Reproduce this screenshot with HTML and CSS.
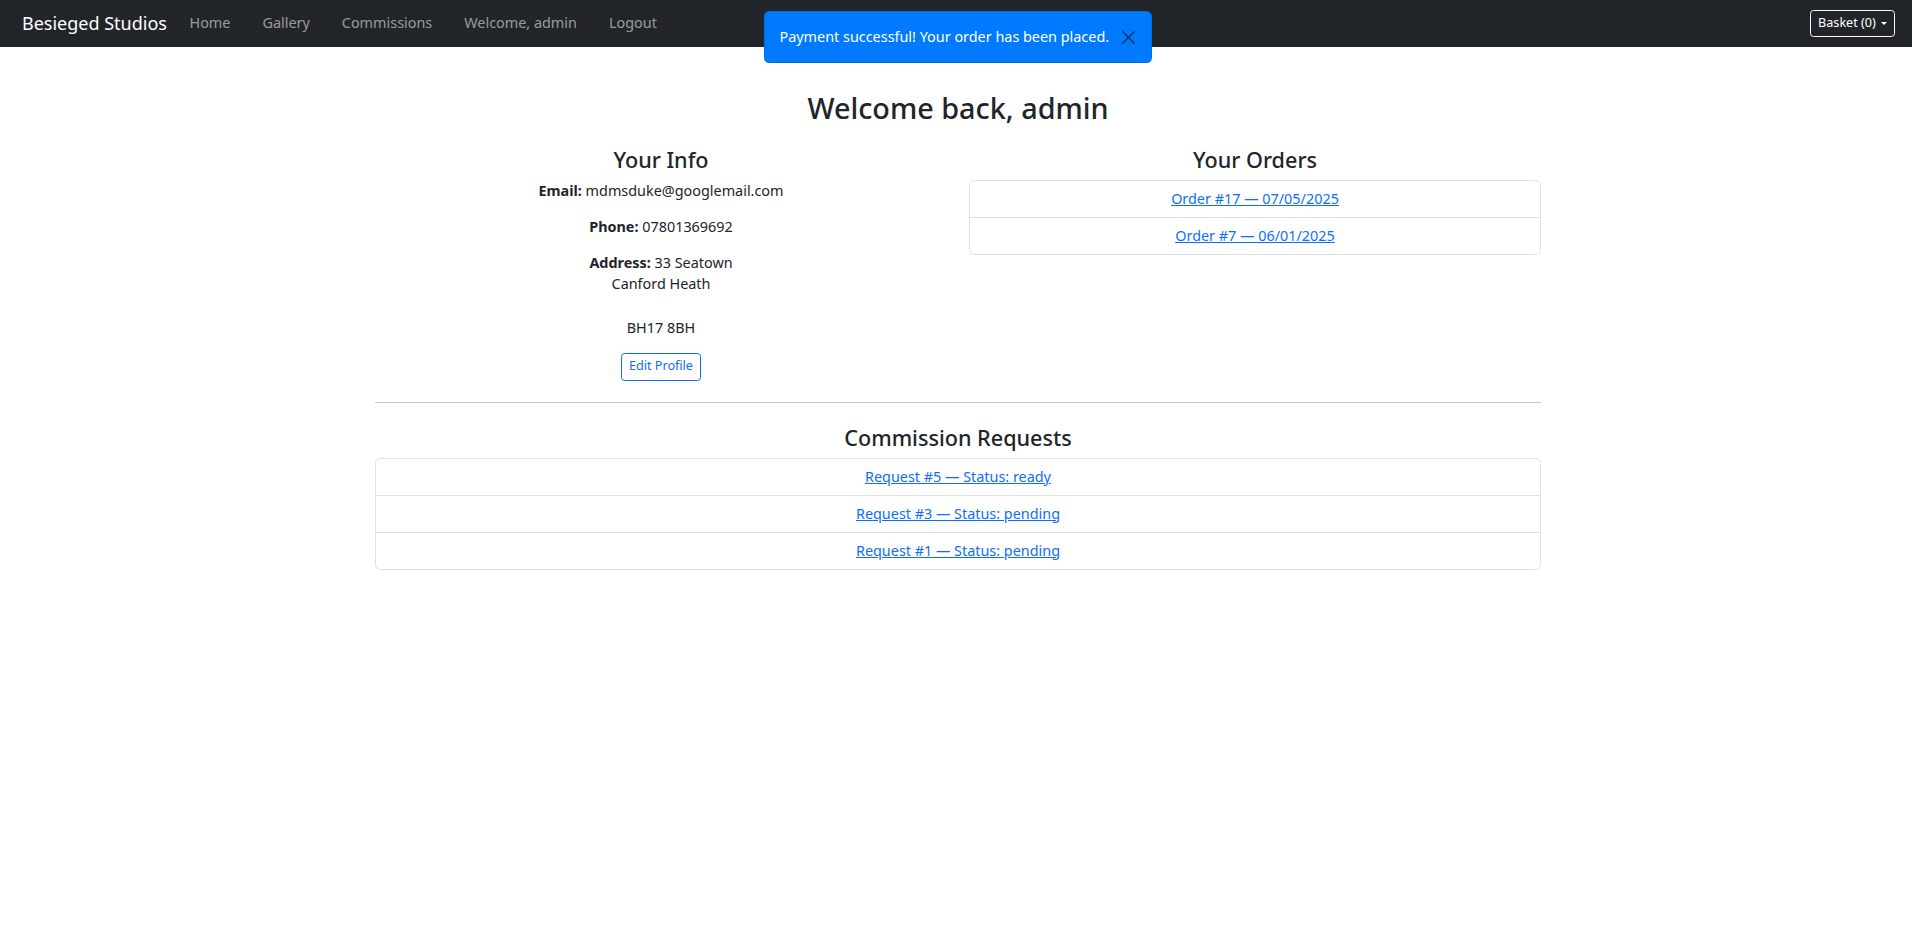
FILE: index.html
```html
<!DOCTYPE html>
<html lang="en">
<head>
<meta charset="utf-8">
<title>Besieged Studios</title>
<link rel="stylesheet" href="styles.css">
</head>
<body>
<nav class="navbar">
  <a class="brand" href="#">Besieged Studios</a>
  <ul class="nav">
    <li><a class="nav-link" href="#">Home</a></li>
    <li><a class="nav-link" href="#">Gallery</a></li>
    <li><a class="nav-link" href="#">Commissions</a></li>
    <li><a class="nav-link" href="#">Welcome, admin</a></li>
    <li><a class="nav-link" href="#">Logout</a></li>
  </ul>
  <button class="basket" type="button">Basket (0)<span class="caret"></span></button>
</nav>

<div class="toast">
  <span class="toast-text">Payment successful! Your order has been placed.</span>
  <button class="toast-close" type="button" aria-label="Close">
    <svg viewBox="0 0 16 16" width="13" height="13"><path d="M.293.293a1 1 0 0 1 1.414 0L8 6.586 14.293.293a1 1 0 1 1 1.414 1.414L9.414 8l6.293 6.293a1 1 0 0 1-1.414 1.414L8 9.414l-6.293 6.293a1 1 0 0 1-1.414-1.414L6.586 8 .293 1.707a1 1 0 0 1 0-1.414z"/></svg>
  </button>
</div>

<main class="container">
  <h2 class="title">Welcome back, admin</h2>
  <div class="row">
    <section class="col">
      <h4 class="subtitle">Your Info</h4>
      <p><strong>Email:</strong> mdmsduke@googlemail.com</p>
      <p><strong>Phone:</strong> 07801369692</p>
      <p><strong>Address:</strong> 33 Seatown<br>Canford Heath<br><br>BH17 8BH</p>
      <div><a class="btn-outline" href="#">Edit Profile</a></div>
    </section>
    <section class="col">
      <h4 class="subtitle">Your Orders</h4>
      <ul class="list">
        <li class="list-item"><a href="#">Order #17 — 07/05/2025</a></li>
        <li class="list-item"><a href="#">Order #7 — 06/01/2025</a></li>
      </ul>
    </section>
  </div>
  <hr class="divider">
  <h4 class="subtitle center">Commission Requests</h4>
  <ul class="list">
    <li class="list-item"><a href="#">Request #5 — Status: ready</a></li>
    <li class="list-item"><a href="#">Request #3 — Status: pending</a></li>
    <li class="list-item"><a href="#">Request #1 — Status: pending</a></li>
  </ul>
</main>
</body>
</html>
```

FILE: styles.css
```css
* { box-sizing: border-box; }

html, body {
  margin: 0;
  padding: 0;
}

body {
  font-family: "Noto Sans", "Liberation Sans", sans-serif;
  font-size: 14.4px;
  line-height: 1.5;
  color: #212529;
  background: #fff;
}

a { color: #0d6efd; }

.navbar {
  height: 47px;
  background: #212529;
  display: flex;
  align-items: center;
  padding: 0 17px 0 22px;
}

.brand {
  font-size: 18px;
  line-height: 27px;
  color: #fff;
  text-decoration: none;
  margin-right: 6.5px;
  padding-bottom: 1px;
}

.nav {
  list-style: none;
  margin: 0;
  padding: 0;
  display: flex;
}

.nav-link {
  display: block;
  padding: 6.2px 16px 8.2px;
  color: rgba(255, 255, 255, 0.55);
  text-decoration: none;
}

.basket {
  margin-left: auto;
  font-family: inherit;
  font-size: 12.6px;
  font-weight: 400;
  line-height: 1.5;
  color: #fff;
  background: transparent;
  border: 1px solid #f8f9fa;
  border-radius: 3.6px;
  padding: 3.1px 7.2px;
  display: inline-flex;
  align-items: center;
}

.caret {
  display: inline-block;
  margin-left: 5px;
  width: 0;
  height: 0;
  border-top: 3.8px solid #fff;
  border-left: 3.8px solid transparent;
  border-right: 3.8px solid transparent;
  margin-top: 1px;
}

.toast {
  position: absolute;
  top: 11px;
  left: 50%;
  transform: translateX(-50%);
  margin-left: 1.5px;
  width: 388px;
  height: 52px;
  background: #007bff;
  border-radius: 5.4px;
  border: 1px solid rgba(0, 0, 0, 0.1);
  color: #fff;
  display: flex;
  align-items: center;
  justify-content: space-between;
  padding: 0 12px 0 15px;
}

.toast-text {
  font-size: 14.4px;
}

.toast-close {
  border: 0;
  background: transparent;
  padding: 3px;
  width: 20px;
  height: 20px;
  display: flex;
  align-items: center;
  justify-content: center;
  opacity: 0.5;
  cursor: pointer;
}

.toast-close svg { fill: #000; display: block; }

.container {
  max-width: 1188px;
  margin: 43.6px auto 0;
  padding: 0 8.8px 0 12.8px;
}

.title {
  font-size: 28.8px;
  font-weight: 500;
  line-height: 1.2;
  margin: 0 0 21.6px;
  text-align: center;
}

.row {
  display: grid;
  grid-template-columns: 1fr 1fr;
  column-gap: 21.6px;
}

.col { text-align: center; }

.subtitle {
  font-size: 21.6px;
  font-weight: 500;
  line-height: 1.2;
  margin: 0 0 7.2px;
}

.center { text-align: center; }

p { margin: 0 0 14.4px; }

strong { font-weight: 700; }

.btn-outline {
  display: inline-block;
  font-size: 12.6px;
  line-height: 1.5;
  padding: 3.6px 7.2px;
  color: #0d6efd;
  border: 1px solid #0d6efd;
  border-radius: 3.6px;
  text-decoration: none;
}

.divider {
  margin: 21.2px 0 21.6px;
  border: 0;
  border-top: 1px solid #c8c9ca;
  height: 0;
}

.list {
  list-style: none;
  margin: 0;
  padding: 0;
  border: 1px solid #dee2e6;
  border-radius: 5.4px;
  text-align: center;
}

.list-item {
  padding: 7.2px 14.4px;
  border-bottom: 1px solid #dee2e6;
}

.list-item:last-child { border-bottom: 0; }
```
